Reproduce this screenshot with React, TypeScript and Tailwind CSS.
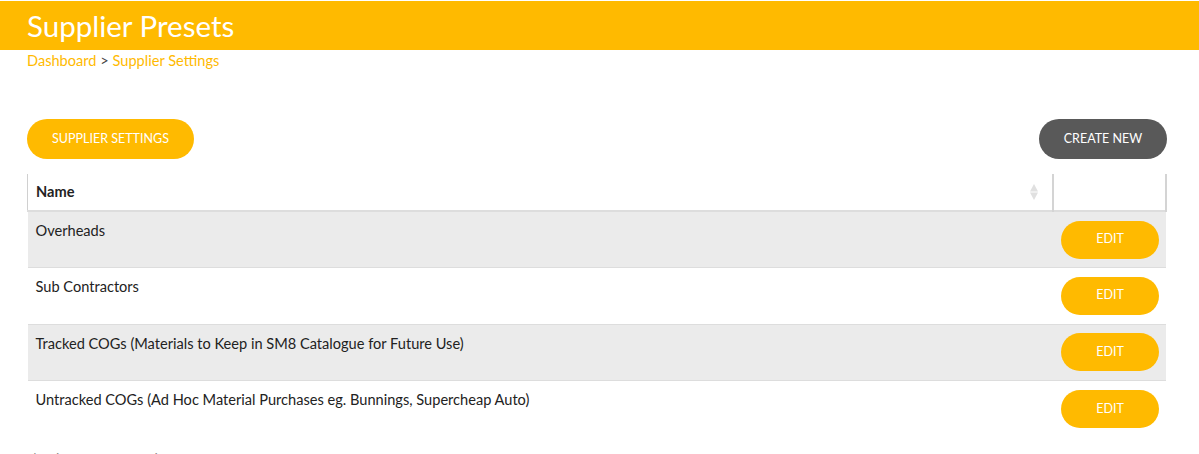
import React from "react";

const rows = [
  "Overheads",
  "Sub Contractors",
  "Tracked COGs (Materials to Keep in SM8 Catalogue for Future Use)",
  "Untracked COGs (Ad Hoc Material Purchases eg. Bunnings, Supercheap Auto)",
];

export default function App() {
  return (
    <div className="min-h-[454px] bg-white font-['Lato','Open_Sans',sans-serif] text-[#222]">
      <div className="h-px bg-white" />
      <header className="h-[49px] bg-[#ffba00] px-[27px] flex items-center">
        <h1 className="text-[29.5px] leading-none text-white">Supplier Presets</h1>
      </header>
      <nav className="px-[27px] pt-[1px] text-[14.6px] leading-[20px]">
        <span className="text-[#ffba00]">Dashboard</span>
        <span className="text-[#444]"> &gt; </span>
        <span className="text-[#ffba00]">Supplier Settings</span>
      </nav>

      <div className="px-[27px] pr-[32px] mt-[48px]">
        <div className="flex justify-between">
          <button className="h-[40px] w-[167px] rounded-full bg-[#ffba00] text-white text-[12.5px] uppercase">
            Supplier Settings
          </button>
          <button className="h-[40px] w-[128px] rounded-full bg-[#595959] text-white text-[12.5px] uppercase">
            Create New
          </button>
        </div>

        <table className="mt-[15px] w-full border-collapse text-[14.6px]">
          <thead>
            <tr className="border-b-2 border-[#dddddd]">
              <th className="h-[37px] border-l border-[#d0d0d0] pl-[8px] text-left font-bold">
                <div className="flex items-center justify-between pr-[14px]">
                  <span>Name</span>
                  <svg width="8" height="16" viewBox="0 0 8 16">
                    <path d="M4 0 L8 7.5 H0 Z" fill="#e0e0e0" />
                    <path d="M4 16 L8 8.5 H0 Z" fill="#e0e0e0" />
                  </svg>
                </div>
              </th>
              <th className="w-[113px] border-l-2 border-r-2 border-[#d4d4d4]" />
            </tr>
          </thead>
          <tbody>
            {rows.map((name, i) => (
              <tr
                key={name}
                className={`border-b border-[#dddddd] ${i % 2 === 0 ? "bg-[#ebebeb]" : "bg-white"} ${i === rows.length - 1 ? "border-b-0" : ""}`}
              >
                <td className="h-[56.5px] align-top pl-[8px] pt-[8px]">{name}</td>
                <td className="align-middle pl-[8px]">
                  <button className="h-[38px] w-[98px] rounded-full bg-[#ffba00] text-white text-[12.5px] uppercase">
                    Edit
                  </button>
                </td>
              </tr>
            ))}
          </tbody>
        </table>
        <div className="mt-[12px] text-[12px] text-[#888]">Showing 1 to 4 of 4 entries</div>
      </div>
    </div>
  );
}
